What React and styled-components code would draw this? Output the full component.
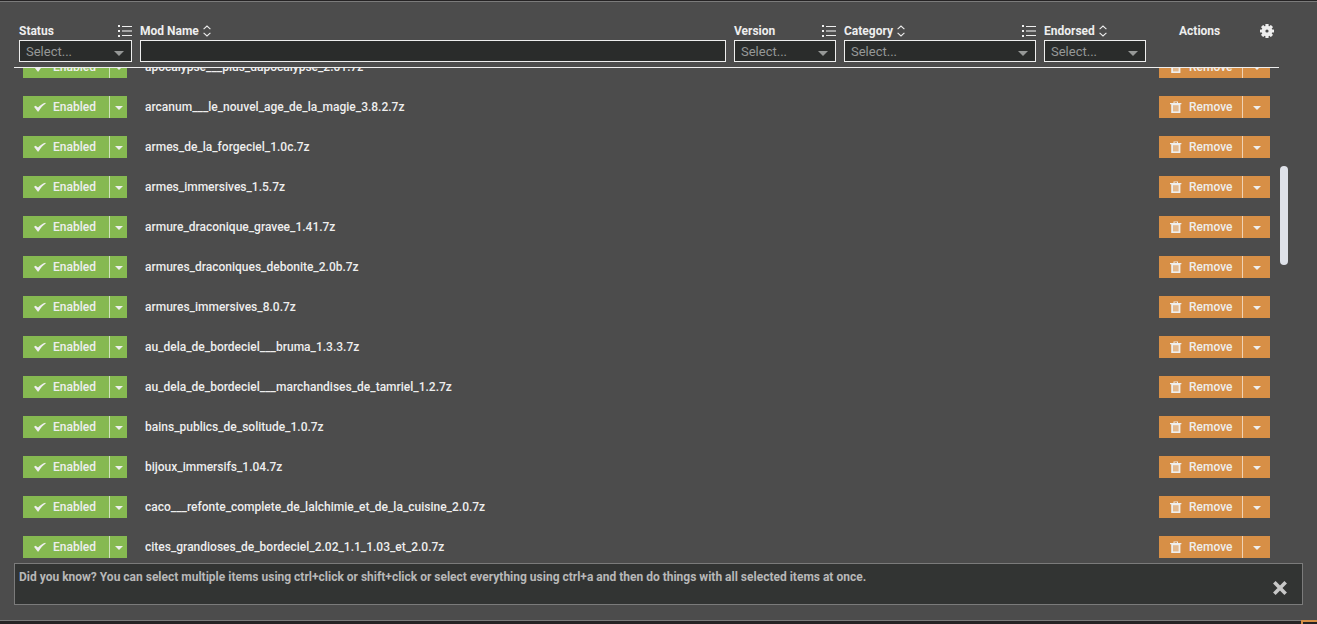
import React, { useLayoutEffect, useRef } from "react";
import styled, { createGlobalStyle, ThemeProvider } from "styled-components";

const theme = {
  page: "#4c4c4c",
  dark: "#2a2c2b",
  strip: "#252324",
  panel: "#323433",
  line: "#7b7b7b",
  text: "#eeeeee",
  muted: "#969897",
  success: "#86b951",
  warning: "#d78f46"
};

// px of the list that is already scrolled under the header
const START_SCROLL = 21;

const mods = [
  "apocalypse___plus_dapocalypse_2.01.7z",
  "arcanum___le_nouvel_age_de_la_magie_3.8.2.7z",
  "armes_de_la_forgeciel_1.0c.7z",
  "armes_immersives_1.5.7z",
  "armure_draconique_gravee_1.41.7z",
  "armures_draconiques_debonite_2.0b.7z",
  "armures_immersives_8.0.7z",
  "au_dela_de_bordeciel___bruma_1.3.3.7z",
  "au_dela_de_bordeciel___marchandises_de_tamriel_1.2.7z",
  "bains_publics_de_solitude_1.0.7z",
  "bijoux_immersifs_1.04.7z",
  "caco___refonte_complete_de_lalchimie_et_de_la_cuisine_2.0.7z",
  "cites_grandioses_de_bordeciel_2.02_1.1_1.03_et_2.0.7z"
];

const columns = [
  { id: "status", label: "Status", width: 122, group: true, filter: "select" },
  { id: "name", label: "Mod Name", sort: true, filter: "text" },
  { id: "version", label: "Version", width: 110, group: true, filter: "select" },
  {
    id: "category",
    label: "Category",
    width: 200,
    sort: true,
    group: true,
    filter: "select"
  },
  { id: "endorsed", label: "Endorsed", width: 110, sort: true, filter: "select" }
];

const SortIcon = () => (
  <svg width="8" height="12" viewBox="0 0 8 12" aria-hidden="true">
    <path
      d="M0.6 4.2L4 1L7.4 4.2M0.6 7.8L4 11L7.4 7.8"
      fill="none"
      stroke="currentColor"
      strokeWidth="1.1"
    />
  </svg>
);

const ListIcon = () => (
  <svg width="14" height="12" viewBox="0 0 14 12" aria-hidden="true">
    <path
      d="M0 0h2v2H0zM0 5h2v2H0zM0 10h2v2H0zM4 1h10v1H4zM4 10h10v1H4z"
      fill="currentColor"
    />
    <path d="M4 5h10v2H4z" fill="currentColor" opacity="0.55" />
  </svg>
);

const CheckIcon = () => (
  <svg width="12" height="10" viewBox="0 0 12 10" aria-hidden="true">
    <path
      d="M0 4.8L1.6 3.8L4 5.6C6 3.4 8.4 1.8 11.2 0.8L11.8 1.4C9 3.2 6.6 5.8 4.6 9.4H3.6Z"
      fill="currentColor"
    />
  </svg>
);

const TrashIcon = () => (
  <svg width="12" height="12" viewBox="0 0 12 12" aria-hidden="true">
    <path
      d="M3.5 2V0.4H8V2H11.4V3.2H10.4V12H1.2V3.2H0V2Z"
      fill="currentColor"
    />
    <path d="M4.5 1.2h2.5v0.8h-2.5z" fill="#d78f46" />
    <path d="M3 4.2h5.6v6.2H3z" fill="#e4ba8f" />
  </svg>
);

const GearIcon = () => (
  <svg width="14" height="14" viewBox="0 0 14 14" aria-hidden="true">
    <g fill="currentColor">
      <rect x="5.4" y="0" width="3.2" height="14" rx="0.5" />
      <rect x="5.4" y="0" width="3.2" height="14" rx="0.5" transform="rotate(45 7 7)" />
      <rect x="5.4" y="0" width="3.2" height="14" rx="0.5" transform="rotate(90 7 7)" />
      <rect x="5.4" y="0" width="3.2" height="14" rx="0.5" transform="rotate(135 7 7)" />
      <circle cx="7" cy="7" r="5.3" />
    </g>
    <circle cx="7" cy="7" r="1.6" fill="#4c4c4c" />
  </svg>
);

const CloseIcon = () => (
  <svg width="14" height="14" viewBox="0 0 14 14" aria-hidden="true">
    <path
      d="M2.6 2.6L11.4 11.4M11.4 2.6L2.6 11.4"
      stroke="currentColor"
      strokeWidth="3.6"
      strokeLinecap="square"
    />
  </svg>
);

const ColumnHeader = ({ column }) => {
  const { id, label, sort, group, filter } = column;
  return (
    <HeadCell scope="col">
      <HeadLabel>
        <label htmlFor={`filter-${id}`}>{label}</label>
        {sort && (
          <IconButton type="button" aria-label={`Sort by ${label}`}>
            <SortIcon />
          </IconButton>
        )}
        {group && (
          <IconButton type="button" aria-label={`Group by ${label}`} $end>
            <ListIcon />
          </IconButton>
        )}
      </HeadLabel>
      {filter === "select" ? (
        <SelectBox>
          <select id={`filter-${id}`} defaultValue="">
            <option value="">Select...</option>
          </select>
          <Caret $size={5} />
        </SelectBox>
      ) : (
        <TextFilter id={`filter-${id}`} type="text" />
      )}
    </HeadCell>
  );
};

const ModRow = ({ name }) => (
  <tr>
    <Cell>
      <Split $color="success">
        <MainButton type="button">
          <CheckIcon />
          Enabled
        </MainButton>
        <ToggleButton type="button" aria-label="Change status" $width={18}>
          <Caret $size={4} />
        </ToggleButton>
      </Split>
    </Cell>
    <Cell>{name}</Cell>
    <Cell />
    <Cell />
    <Cell />
    <Cell>
      <Split $color="warning">
        <MainButton type="button">
          <TrashIcon />
          Remove
        </MainButton>
        <ToggleButton type="button" aria-label="More actions" $width={28}>
          <Caret $size={4} />
        </ToggleButton>
      </Split>
    </Cell>
  </tr>
);

const App = () => {
  const listRef = useRef(null);

  useLayoutEffect(() => {
    listRef.current.scrollTop = START_SCROLL;
  }, []);

  return (
    <ThemeProvider theme={theme}>
      <GlobalStyle />
      <Page>
        <TopStrip />
        <Content>
          <ListArea>
            <ListScroll ref={listRef}>
              <Table>
                <colgroup>
                  {columns.map(column => (
                    <col key={column.id} width={column.width} />
                  ))}
                  <col width={129} />
                </colgroup>
                <thead>
                  <tr>
                    {columns.map(column => (
                      <ColumnHeader key={column.id} column={column} />
                    ))}
                    <HeadCell scope="col">
                      <ActionsLabel>
                        <span>Actions</span>
                        <IconButton type="button" aria-label="Table settings">
                          <GearIcon />
                        </IconButton>
                      </ActionsLabel>
                    </HeadCell>
                  </tr>
                </thead>
                <tbody>
                  {mods.map(name => (
                    <ModRow key={name} name={name} />
                  ))}
                </tbody>
              </Table>
            </ListScroll>
            <ScrollTrack>
              <ScrollThumb />
            </ScrollTrack>
          </ListArea>
          <Tip>
            <p>
              Did you know? You can select multiple items using ctrl+click or
              shift+click or select everything using ctrl+a and then do things
              with all selected items at once.
            </p>
            <IconButton type="button" aria-label="Dismiss">
              <CloseIcon />
            </IconButton>
          </Tip>
        </Content>
        <BottomStrip>
          <StripLine />
          <StripTab />
        </BottomStrip>
      </Page>
    </ThemeProvider>
  );
};

export default App;

const GlobalStyle = createGlobalStyle`
  * {
    box-sizing: border-box;
  }
  body {
    margin: 0;
    background-color: ${props => props.theme.page};
    color: ${props => props.theme.text};
    font: 500 12px/18px Roboto, "Liberation Sans", sans-serif;
  }
  button,
  input,
  select {
    margin: 0;
    padding: 0;
    border: none;
    background: none;
    color: inherit;
    font: inherit;
  }
  button {
    cursor: pointer;
  }
  svg {
    display: block;
    flex: none;
  }
`;

const Page = styled.div`
  display: flex;
  flex-direction: column;
  height: 100vh;
`;

const TopStrip = styled.div`
  flex: none;
  height: 2px;
  background-color: ${props => props.theme.strip};
  border-bottom: 1px solid ${props => props.theme.line};
`;

const Content = styled.main`
  flex: 1;
  min-height: 0;
  display: flex;
  flex-direction: column;
  padding: 20px 14px 15px;
`;

const ListArea = styled.div`
  flex: 1;
  min-height: 0;
  display: flex;
  gap: 1px;
  padding-right: 15px;
`;

const ListScroll = styled.div`
  flex: 1;
  min-width: 0;
  overflow-y: auto;
  scrollbar-width: none;
`;

const ScrollTrack = styled.div`
  width: 8px;
  padding-top: 144px;
`;

const ScrollThumb = styled.div`
  height: 99px;
  border-radius: 4px;
  background-color: #dfe2e9;
`;

const Table = styled.table`
  width: 100%;
  table-layout: fixed;
  border-collapse: separate;
  border-spacing: 0;
  thead {
    position: sticky;
    top: 0;
    z-index: 1;
  }
`;

const HeadCell = styled.th`
  padding: 0 4px 5px;
  vertical-align: top;
  text-align: left;
  font-weight: 700;
  background-color: ${props => props.theme.page};
  border-bottom: 1px solid ${props => props.theme.text};
  &:first-child {
    padding-left: 5px;
  }
  &:last-child {
    padding-right: 5px;
  }
`;

const HeadLabel = styled.div`
  display: flex;
  align-items: center;
  gap: 4px;
  height: 18px;
`;

const ActionsLabel = styled(HeadLabel)`
  justify-content: space-between;
  padding-left: 25px;
`;

const IconButton = styled.button`
  flex: none;
  margin-left: ${props => (props.$end ? "auto" : "0")};
`;

const SelectBox = styled.div`
  display: flex;
  align-items: center;
  height: 22px;
  padding: 2px 7px 0 0;
  background-color: ${props => props.theme.dark};
  border: 1px solid ${props => props.theme.text};
  color: ${props => props.theme.muted};
  select {
    flex: 1;
    min-width: 0;
    padding-left: 6px;
    appearance: none;
    outline: none;
    font-size: 13px;
    font-weight: 400;
  }
`;

const TextFilter = styled.input`
  display: block;
  width: 100%;
  height: 22px;
  && {
    padding: 0 6px;
    background-color: ${props => props.theme.dark};
    border: 1px solid ${props => props.theme.text};
  }
`;

const Caret = styled.span`
  flex: none;
  margin-top: 2px;
  border: ${props => props.$size}px solid transparent;
  border-top-color: currentColor;
  border-bottom: none;
`;

const Cell = styled.td`
  height: 40px;
  padding: 0 9px;
  white-space: nowrap;
`;

const Split = styled.div`
  display: flex;
  height: 22px;
  background-color: ${props => props.theme[props.$color]};
`;

const MainButton = styled.button`
  flex: 1;
  display: flex;
  align-items: center;
  gap: 7px;
  && {
    padding-left: 11px;
  }
`;

const ToggleButton = styled.button`
  display: flex;
  align-items: center;
  justify-content: center;
  width: ${props => props.$width}px;
  && {
    border-left: 1px solid rgba(255, 255, 255, 0.6);
  }
`;

const Tip = styled.div`
  flex: none;
  display: flex;
  justify-content: space-between;
  padding: 4px 15px 9px 4px;
  background-color: ${props => props.theme.panel};
  border: 1px solid ${props => props.theme.line};
  color: #b8b8b8;
  font-weight: 700;
  p {
    margin: 0;
  }
  button {
    align-self: flex-end;
    padding-top: 13px;
    color: #c8c8c8;
  }
`;

const BottomStrip = styled.div`
  flex: none;
  display: flex;
  height: 4px;
  background-color: ${props => props.theme.strip};
`;

const StripLine = styled.div`
  flex: 1;
  border-top: 1px solid ${props => props.theme.line};
`;

const StripTab = styled.div`
  width: 16px;
  border-top: 2px solid ${props => props.theme.warning};
  border-left: 2px solid ${props => props.theme.warning};
`;
